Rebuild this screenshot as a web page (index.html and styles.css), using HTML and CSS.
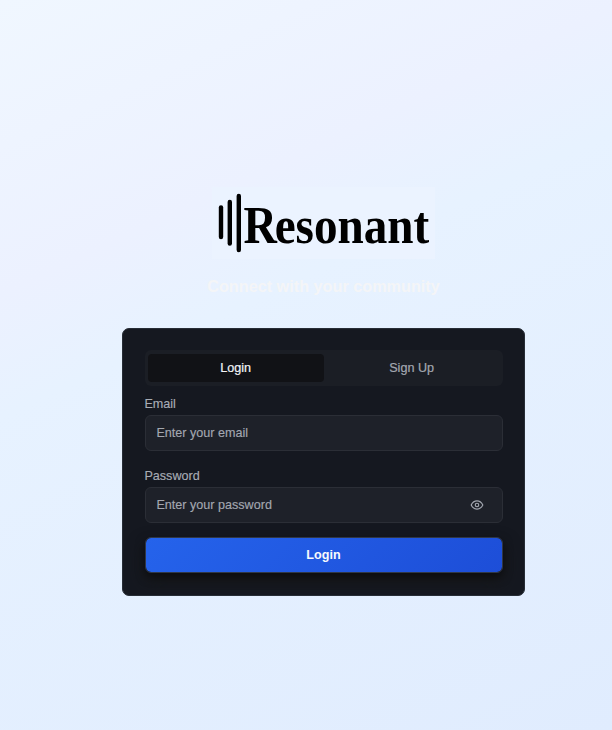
FILE: index.html
```html
<!DOCTYPE html>
<html lang="en">
<head>
<meta charset="utf-8">
<title>Resonant</title>
<link rel="stylesheet" href="styles.css">
</head>
<body>
<main class="page">
  <svg class="logo" viewBox="0 0 223 72" role="img" aria-label="Resonant">
    <g class="logo-bars">
      <path d="M9 20.500V50"/>
      <path d="M17.800 15V56.500"/>
      <path d="M26.800 9V63"/>
    </g>
    <text class="logo-text" transform="translate(31.500 56) scale(.89 1)">R<tspan class="logo-lower" dx="-2.500">esonant</tspan></text>
  </svg>
  <p class="tagline"><span>Connect with your community</span></p>
  <section class="card">
    <div class="tabs">
      <button class="tab tab-active" type="button">Login</button>
      <button class="tab" type="button">Sign Up</button>
    </div>
    <form class="form">
      <label class="label" for="email">Email</label>
      <div class="field"><input id="email" class="input" type="email" placeholder="Enter your email"></div>
      <label class="label label-password" for="password">Password</label>
      <div class="field">
        <input id="password" class="input" type="password" placeholder="Enter your password">
        <svg class="eye" viewBox="0 0 24 24"><path d="M2 12s3.600-7 10-7 10 7 10 7-3.600 7-10 7-10-7-10-7Z"/><circle cx="12" cy="12" r="3"/></svg>
      </div>
      <button class="submit" type="button">Login</button>
    </form>
  </section>
</main>
</body>
</html>
```
FILE: styles.css
```css
* { box-sizing: border-box; }
body {
  margin: 0;
  font-family: "Liberation Sans", Arial, sans-serif;
  font-size: 12.6px;
}
.page {
  width: 612px;
  height: 730px;
  padding: 187px 87px 0 122px;
  display: flex;
  flex-direction: column;
  align-items: center;
  overflow: hidden;
  background: linear-gradient(155deg, #f0f7ff 0%, #ecf1ff 29%, #e7f2ff 41%, #e0ecfe 100%);
}
.logo { width: 223px; height: 72px; flex: none; overflow: visible; background: #ebf3ff; }
.logo-bars { stroke: #000; stroke-width: 4.4; stroke-linecap: round; }
.logo-text { font: bold 52px "Liberation Serif", serif; }
.logo-lower { font-size: 53px; }
.tagline {
  margin: 16px 0 0;
  height: 53px;
  line-height: 22px;
  font-size: 16.2px;
  font-weight: 700;
  letter-spacing: 0.02px;
  color: #f4f5f7;
  white-space: nowrap;
}
.card {
  width: 403px;
  height: 268px;
  padding: 21px;
  border: 1px solid #272d36;
  border-radius: 7px;
  background: #151820;
  overflow: hidden;
}
.tabs {
  display: flex;
  height: 36px;
  margin: 0 0 0 1px;
  width: 358px;
  padding: 3px;
  border-radius: 6px;
  background: #1b1e25;
}
.tab {
  flex: 1;
  margin: 1px 0;
  padding: 0 0.8px 0 0;
  border: 0;
  border-radius: 4px;
  background: transparent;
  color: #a3a7b0;
  font: 12.6px "Liberation Sans", sans-serif;
  -webkit-text-stroke: 0.2px currentColor;
}
.tab-active { background: #111216; color: #f3f4f6; }
.form {
  display: flex;
  flex-direction: column;
  width: 358px;
  margin-left: 1px;
}
.label {
  margin: 9px 0 0 -0.6px;
  height: 20px;
  line-height: 18px;
  color: #a8acb5;
  -webkit-text-stroke: 0.15px currentColor;
}
.label-password { margin-top: 16px; }
.field {
  display: flex;
  align-items: center;
  height: 36px;
  padding: 0 18px 0 10.4px;
  border: 1px solid #2b2e36;
  border-radius: 6px;
  background: #1e2129;
}
.input {
  flex: 1;
  min-width: 0;
  padding: 0;
  border: 0;
  outline: 0;
  background: transparent;
  color: #e5e7eb;
  font: 12.6px "Liberation Sans", sans-serif;
  -webkit-text-stroke: 0.15px currentColor;
}
.input::placeholder { color: #a3a7b0; opacity: 1; }
.eye {
  width: 14px;
  height: 14px;
  fill: none;
  stroke: #a3a7b0;
  stroke-width: 2;
  stroke-linecap: round;
  stroke-linejoin: round;
}
.submit {
  height: 36px;
  margin-top: 14px;
  padding: 0 1px 0 0;
  border: 1px solid #303746;
  border-radius: 6px;
  background: linear-gradient(135deg, #2563eb, #1d4ed8) padding-box;
  box-shadow: 0 4px 10px rgba(0, 0, 0, 0.5), 0 9px 18px #17181a;
  color: #f8fafc;
  font: bold 12.6px "Liberation Sans", sans-serif;
}
```
